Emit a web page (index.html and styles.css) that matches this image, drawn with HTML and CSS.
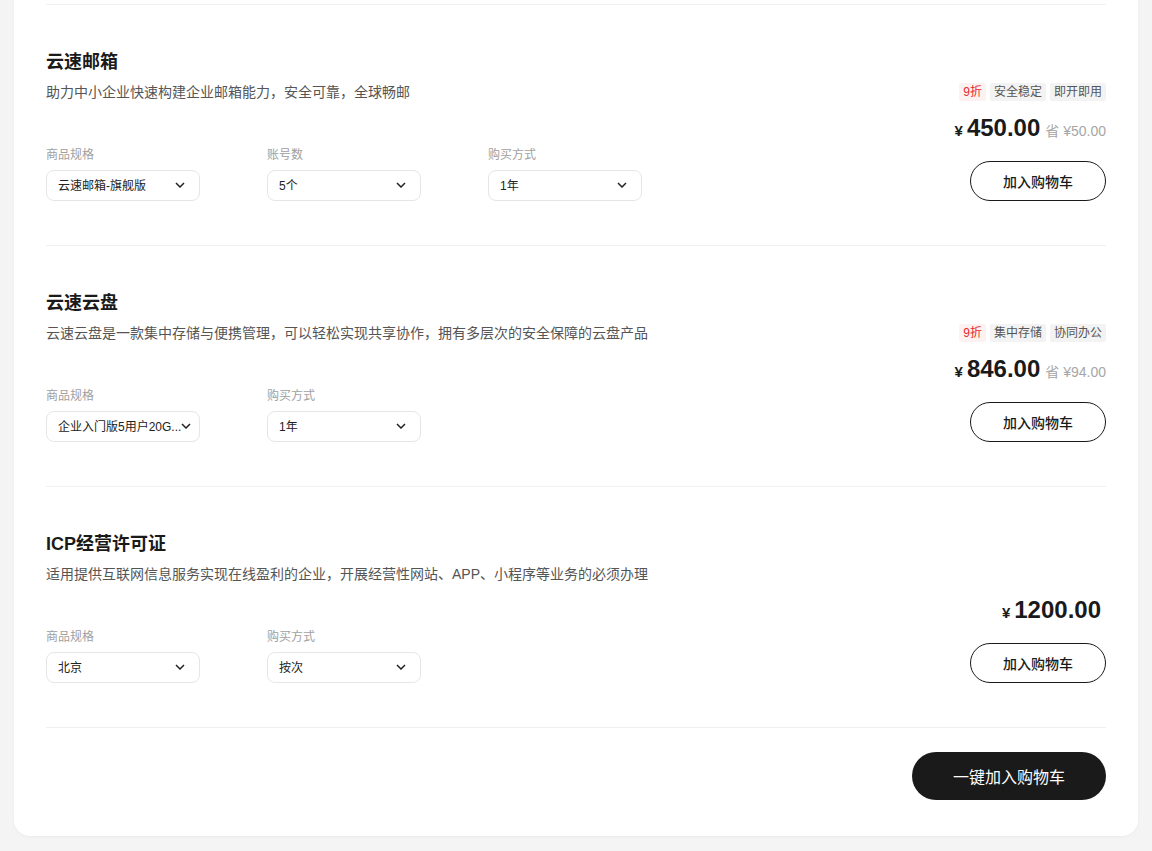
FILE: index.html
```html
<!DOCTYPE html>
<html lang="zh-CN">

<head>
  <meta charset="UTF-8">
  <meta name="viewport" content="width=device-width, initial-scale=1.0">
  <title>购买商品</title>
  <link rel="stylesheet" href="styles.css">
</head>

<body>
  <div class="card">

    <div class="product">
      <div class="product-info">
        <h3 class="product-title">云速邮箱</h3>
        <p class="product-desc">助力中小企业快速构建企业邮箱能力，安全可靠，全球畅邮</p>
        <div class="options">
          <div class="option">
            <div class="option-label">商品规格</div>
            <div class="select"><span class="select-text">云速邮箱-旗舰版</span>
              <svg class="chevron" viewBox="0 0 10 6"><path d="M1 1l4 4 4-4" /></svg></div>
          </div>
          <div class="option">
            <div class="option-label">账号数</div>
            <div class="select"><span class="select-text">5个</span>
              <svg class="chevron" viewBox="0 0 10 6"><path d="M1 1l4 4 4-4" /></svg></div>
          </div>
          <div class="option">
            <div class="option-label">购买方式</div>
            <div class="select"><span class="select-text">1年</span>
              <svg class="chevron" viewBox="0 0 10 6"><path d="M1 1l4 4 4-4" /></svg></div>
          </div>
        </div>
      </div>
      <div class="product-buy">
        <div class="tags">
          <span class="tag tag-sale">9折</span>
          <span class="tag">安全稳定</span>
          <span class="tag">即开即用</span>
        </div>
        <div class="price">
          <span class="currency">¥</span>
          <span class="amount">450.00</span>
          <span class="save">省 ¥50.00</span>
        </div>
        <button class="cart-btn">加入购物车</button>
      </div>
    </div>

    <div class="product">
      <div class="product-info">
        <h3 class="product-title">云速云盘</h3>
        <p class="product-desc">云速云盘是一款集中存储与便携管理，可以轻松实现共享协作，拥有多层次的安全保障的云盘产品</p>
        <div class="options">
          <div class="option">
            <div class="option-label">商品规格</div>
            <div class="select"><span class="select-text">企业入门版5用户20G...</span>
              <svg class="chevron" viewBox="0 0 10 6"><path d="M1 1l4 4 4-4" /></svg></div>
          </div>
          <div class="option">
            <div class="option-label">购买方式</div>
            <div class="select"><span class="select-text">1年</span>
              <svg class="chevron" viewBox="0 0 10 6"><path d="M1 1l4 4 4-4" /></svg></div>
          </div>
        </div>
      </div>
      <div class="product-buy">
        <div class="tags">
          <span class="tag tag-sale">9折</span>
          <span class="tag">集中存储</span>
          <span class="tag">协同办公</span>
        </div>
        <div class="price">
          <span class="currency">¥</span>
          <span class="amount">846.00</span>
          <span class="save">省 ¥94.00</span>
        </div>
        <button class="cart-btn">加入购物车</button>
      </div>
    </div>

    <div class="product">
      <div class="product-info">
        <h3 class="product-title">ICP经营许可证</h3>
        <p class="product-desc">适用提供互联网信息服务实现在线盈利的企业，开展经营性网站、APP、小程序等业务的必须办理</p>
        <div class="options">
          <div class="option">
            <div class="option-label">商品规格</div>
            <div class="select"><span class="select-text">北京</span>
              <svg class="chevron" viewBox="0 0 10 6"><path d="M1 1l4 4 4-4" /></svg></div>
          </div>
          <div class="option">
            <div class="option-label">购买方式</div>
            <div class="select"><span class="select-text">按次</span>
              <svg class="chevron" viewBox="0 0 10 6"><path d="M1 1l4 4 4-4" /></svg></div>
          </div>
        </div>
      </div>
      <div class="product-buy">
        <div class="tags"></div>
        <div class="price">
          <span class="currency">¥</span>
          <span class="amount">1200.00</span>
          <span class="save"></span>
        </div>
        <button class="cart-btn">加入购物车</button>
      </div>
    </div>

    <div class="footer">
      <button class="all-btn">一键加入购物车</button>
    </div>

  </div>
</body>

</html>
```

FILE: styles.css
```css
body {
  font-family: "Liberation Sans", "Noto Sans CJK SC", sans-serif;
  margin: 0;
  padding: 0 14px 15px;
  background-color: #f4f4f4; /* light gray page */
  color: #1a1a1a;
}

.card {
  background-color: #fff;
  border-radius: 0 0 16px 16px;
  padding: 4px 32px 36px;
  box-shadow: 0 1px 3px rgba(0, 0, 0, 0.04);
}

.product {
  display: flex;
  justify-content: space-between;
  border-top: 1px solid #f0f0f0;
  padding: 44px 0 44px;
}

.product-title {
  margin: 0;
  font-size: 18px;
  line-height: 26px;
  font-weight: 700;
}

.product-desc {
  margin: 7px 0 0;
  font-size: 14px;
  line-height: 20px;
  color: #555;
}

.options {
  display: flex;
  gap: 67px;
  margin-top: 44px;
}

.option-label {
  font-size: 12px;
  line-height: 18px;
  color: #a0a0a0;
  margin-bottom: 6px;
}

.select {
  width: 154px;
  height: 31px;
  box-sizing: border-box;
  border: 1px solid #e6e6e6;
  border-radius: 8px;
  display: flex;
  align-items: center;
  justify-content: space-between;
  padding: 0 14px 2px 11px;
}

.select-text {
  font-size: 12px;
  color: #222;
  white-space: nowrap;
}

.chevron {
  width: 10px;
  height: 6px;
  flex-shrink: 0;
  fill: none;
  stroke: #222;
  stroke-width: 1.5;
}

.product-buy {
  display: flex;
  flex-direction: column;
  align-items: flex-end;
  padding-top: 34px;
}

.tags {
  display: flex;
  gap: 4px;
  height: 18px;
}

.tag {
  font-size: 12px;
  line-height: 18px;
  padding: 0 4px;
  border-radius: 2px;
  background-color: #f3f3f3;
  color: #555;
}

.tag-sale {
  background-color: #fdf2f2;
  color: #e8262b; /* red discount */
}

.price {
  margin-top: 12px;
  height: 30px;
  display: flex;
  align-items: baseline;
}

.currency {
  font-size: 15px;
  font-weight: 700;
  margin-right: 4px;
}

.amount {
  font-size: 24px;
  line-height: 30px;
  font-weight: 700;
}

.save {
  font-size: 14px;
  color: #a6a6a6;
  margin-left: 5px;
}

.cart-btn {
  margin-top: 18px;
  width: 136px;
  height: 40px;
  border: 1px solid #1a1a1a;
  border-radius: 20px;
  background-color: #fff;
  font-family: inherit;
  font-size: 14px;
  font-weight: 500;
  color: #1a1a1a;
  cursor: pointer;
}

.footer {
  display: flex;
  justify-content: flex-end;
  border-top: 1px solid #f0f0f0;
  padding-top: 24px;
}

.all-btn {
  width: 194px;
  height: 48px;
  border: none;
  border-radius: 24px;
  background-color: #1a1a1a;
  color: #fff;
  font-family: inherit;
  font-size: 16px;
  cursor: pointer;
}
```
